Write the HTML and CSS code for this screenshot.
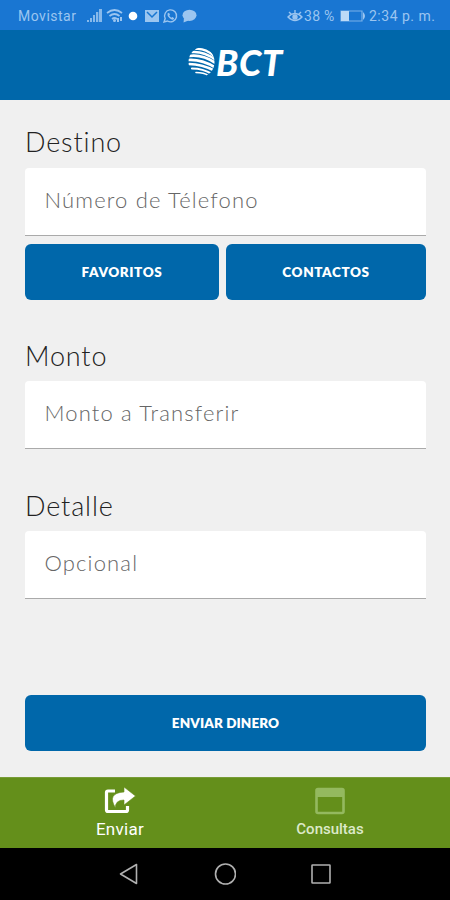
FILE: index.html
```html
<!DOCTYPE html>
<html lang="es">
<head>
<meta charset="utf-8">
<title>BCT</title>
<link rel="stylesheet" href="styles.css">
</head>
<body>
<div class="status">
  <span class="carrier">Movistar</span>
  <svg class="status-left" width="112" height="16" viewBox="0 0 112 16">
    <g fill="#9bc5f0">
      <path d="M1 12h2v2H1zM4 10h2v4H4zM7 7h2v7H7zM10 4h2.300v10H10zM13 1h3v13h-3z" opacity=".85"/>
      <g fill="none" stroke="#9bc5f0" stroke-width="1.700"><path d="M21 5q7.500-6 15 0M23.500 8q5-4 10 0M26 11q2.500-2 5 0"/></g>
      <circle cx="28.500" cy="12.500" r="1.500"/>
      <path d="M31 10h2v4h-2zM34 9h2v4h-2z"/>
      <path d="M59 2h14v12H59z"/>
      <path d="M61 4l5 5 5-5" fill="none" stroke="#1976d2" stroke-width="1.500"/>
      <path d="M78 14l1.200-3.500A6 6 0 1 1 81.500 13z" fill="none" stroke="#9bc5f0" stroke-width="1.400"/>
      <path d="M81.500 5.500l1.500-.7 1 2-.8 1 2 2 1.200-.8 1.800 1.200-.8 1.300q-1.500.8-4-1.500T81.500 5.500z"/>
      <ellipse cx="103.500" cy="7.300" rx="7" ry="5.600"/><path d="M98 10l-.5 4.500 5-2z"/>
    </g>
    <circle cx="47" cy="8" r="4.300" fill="#fff"/>
  </svg>
  <span class="grow"></span>
  <svg width="16" height="14" viewBox="0 0 16 14" fill="none" stroke="#9bc5f0" stroke-width="1.400"><path d="M1 8q7-7 14 0q-7 7-14 0zM2 3l2.500 2.500M8 1v3M14 3l-2.500 2.500"/><circle cx="8" cy="8" r="2" fill="#9bc5f0"/></svg>
  <span class="battery-text">38 %</span>
  <svg class="battery" width="26" height="12" viewBox="0 0 26 12"><path d="M1 1h21v10H1z" fill="none" stroke="#9bc5f0" stroke-width="1.200" opacity=".75"/><path d="M1 1h8v10H1z" fill="#bcdaf7"/><path d="M23 2q4 4 0 8z" fill="#9bc5f0"/></svg>
  <span class="clock">2:34 p. m.</span>
</div>
<header class="header">
  <svg class="globe" width="28" height="30" viewBox="0 0 28 30">
    <defs><clipPath id="ball"><ellipse cx="13.500" cy="15" rx="13" ry="14.500"/></clipPath></defs>
    <g clip-path="url(#ball)" fill="none" stroke="#fff" stroke-linecap="round">
      <path d="M8 2q9-1 18 7" stroke-width="2.200"/>
      <path d="M4 5q12-1 24 8" stroke-width="2.500"/>
      <path d="M1 9q14-2 28 8" stroke-width="2.600"/>
      <path d="M0 13q14-1 28 8" stroke-width="2.700"/>
      <path d="M1 17q13 0 26 7" stroke-width="2.500"/>
      <path d="M4 21.500q11 0 20 5.500" stroke-width="2.100"/>
      <path d="M8 25.500q8 0 12 3" stroke-width="1.600"/>
    </g>
  </svg>
  <span class="brand">BCT</span>
</header>
<main class="form">
  <section class="group destino">
    <h2 class="label l-destino">Destino</h2>
    <div class="field"><span class="p-phone">Número de Télefono</span></div>
    <div class="buttons">
      <div class="button favorites">FAVORITOS</div>
      <div class="button contacts">CONTACTOS</div>
    </div>
  </section>
  <section class="group monto">
    <h2 class="label">Monto</h2>
    <div class="field">Monto a Transferir</div>
  </section>
  <section class="group detalle">
    <h2 class="label">Detalle</h2>
    <div class="field">Opcional</div>
  </section>
  <div class="button send">ENVIAR DINERO</div>
</main>
<nav class="tabs">
  <div class="tab active">
    <svg width="32" height="28" viewBox="0 0 32 28"><path d="M11 4H4Q2.500 4 2.500 5.500V23Q2.500 24.500 4 24.500H22Q23.500 24.500 23.500 23V19" fill="none" stroke="#fff" stroke-width="3.200"/><path d="M20 0l11.500 9-11.500 9v-5q-9 0-8.500 8Q2.500 6 20 5z" fill="#fff" stroke="#648f1b" stroke-width=".6"/></svg>
    <span>Enviar</span>
  </div>
  <div class="tab">
    <svg width="32" height="28" viewBox="0 0 32 28"><rect x="2.500" y="2" width="27" height="24" rx="1.500" fill="none" stroke="#94b95f" stroke-width="2.600"/><path d="M2 2h28v8H2z" fill="#94b95f"/></svg>
    <span>Consultas</span>
  </div>
</nav>
<div class="system">
  <svg width="22" height="22" viewBox="0 0 22 22"><path d="M18.500 1.500v19L2.500 11z"/></svg>
  <svg width="22" height="22" viewBox="0 0 22 22"><circle cx="11.500" cy="11" r="10"/></svg>
  <svg width="22" height="22" viewBox="0 0 22 22"><rect x="2" y="2" width="18" height="18" rx=".5"/></svg>
</div>
</body>
</html>
```
FILE: styles.css
```css
* { box-sizing: border-box; }
body { margin: 0; width: 450px; height: 900px; overflow: hidden; display: flex; flex-direction: column; background: #f0f0f0; font-family: Lato, sans-serif; }
svg { display: block; flex: none; }
.status { height: 30px; flex: none; background: #1976d2; color: #9bc5f0; display: flex; align-items: center; padding: 2px 15px 0 18px; font: 14px/28px Roboto, sans-serif; white-space: nowrap; }
.carrier { width: 68px; letter-spacing: .5px; }
.status-left { margin-top: -1px; }
.grow { flex: 1; }
.battery-text { width: 36px; margin-left: 1px; letter-spacing: .3px; }
.battery { margin-right: 3px; }
.clock { width: 66px; letter-spacing: .5px; }
.header { height: 70px; flex: none; background: #0067aa; display: flex; align-items: flex-start; padding: 17px 0 0 188px; }
.brand { margin-top: -1px; font: italic 900 36px/32px Lato, sans-serif; letter-spacing: .7px; color: #fff; }
.form { height: 677px; flex: none; padding: 26px 24px 0 25px; }
.group { height: 213px; }
.detalle { height: 190px; padding-top: 1px; }
.monto { height: 150px; padding-top: 1px; }
.label { margin: 0; height: 42px; font-size: 27px; line-height: 31px; font-weight: 300; letter-spacing: .85px; color: #222; white-space: nowrap; }
.monto .label, .detalle .label { height: 41px; }
.field { height: 68px; background: #fff; border-radius: 4px 4px 0 0; border-bottom: 1.500px solid #aaa; padding-left: 19.500px; font-size: 22px; line-height: 64px; font-weight: 300; letter-spacing: 1.150px; color: #666; white-space: nowrap; }
.buttons { display: flex; gap: 7px; margin-top: 8px; }
.button { height: 56px; border-radius: 6px; background: #0067aa; color: #fff; text-align: center; font-size: 13.500px; line-height: 56px; font-weight: 800; letter-spacing: .6px; white-space: nowrap; }
.favorites { width: 194px; }
.contacts { width: 200px; }
.send { margin-top: 16px; letter-spacing: .1px; line-height: 57px; }
.tabs { height: 71px; flex: none; background: #648f1b; border-top: 1px solid #789c37; display: flex; padding: 0 15px; }
.tab { width: 210px; display: flex; flex-direction: column; align-items: center; padding-top: 9px; color: #dce9c9; font: 500 15px/24px Roboto, sans-serif; }
.active { color: #fff; font-weight: 400; font-size: 17px; letter-spacing: .3px; }
.tab span { padding-top: 2px; }
.system { height: 52px; flex: none; background: #000; display: flex; justify-content: space-between; padding: 15px 118px 0; }
.system svg { fill: none; stroke: #b0b0b0; stroke-width: 1.600; stroke-linejoin: round; }
```
